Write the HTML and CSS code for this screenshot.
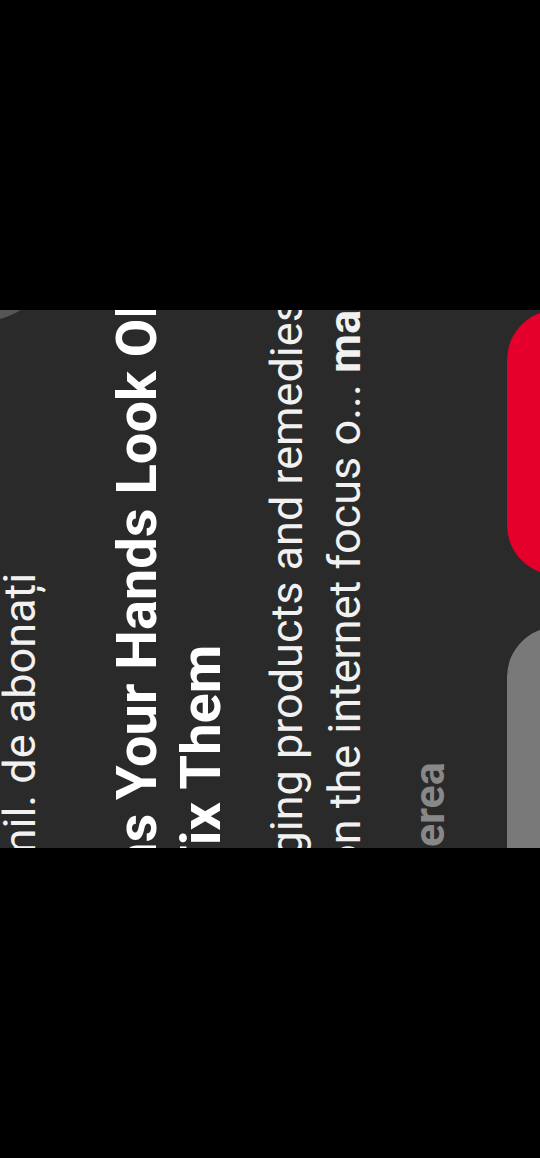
FILE: index.html
```html
<!DOCTYPE html>
<html lang="ro">
<head>
    <meta charset="UTF-8">
    <meta name="viewport" content="width=device-width, initial-scale=1.0">
    <title>Canal</title>
    <link rel="stylesheet" href="styles.css">
</head>
<body>
    <div id="stage">
        <div id="card">
            <div class="avatar"></div>
            <p class="subs">mil. de abonați</p>
            <h1 class="title">
                <span class="t1">ns Your Hands Look Old</span>
                <span class="t2">Fix Them</span>
            </h1>
            <div class="desc">
                <p class="d1">aging products and remedies</p>
                <p class="d2">on the internet focus o... <b>mai mult</b></p>
            </div>
            <p class="label">erea</p>
            <div class="actions">
                <div class="btn btn-gray"></div>
                <div class="btn btn-red"></div>
            </div>
        </div>
    </div>
</body>
</html>
```

FILE: styles.css
```css
body {
    margin: 0;
    background-color: #000;
    font-family: Roboto, "Noto Sans", sans-serif;
    color: #f1f1f1;
}

#stage {
    width: 540px;
    height: 538px;
    margin-top: 310px;
    overflow: hidden;
    background-color: #2a2a2a;
}

/* the card is drawn on its side, so it is laid out upright and then turned */
#card {
    position: relative;
    width: 538px;
    height: 540px;
    transform-origin: 0 0;
    transform: translateY(538px) rotate(-90deg);
}

#card p {
    margin: 0;
    white-space: nowrap;
}

.avatar {
    position: absolute;
    left: 525px;
    top: -122px;
    width: 190px;
    height: 190px;
    border-radius: 50%;
    background-color: #555;
}

.subs {
    font-size: 45px;
    line-height: 40px;
    text-indent: -20px;
}

.title {
    margin: 65px 0 0;
    font-size: 56px;
    font-weight: 700;
    line-height: 64px;
    color: #fff;
    white-space: nowrap;
}

.title span {
    display: block;
}

.t1 {
    text-indent: -26px;
}

.t2 {
    text-indent: -28px;
}

.desc {
    margin-top: 25px;
    font-size: 45px;
    line-height: 58px;
}

#card .d1 {
    text-indent: -33px;
}

#card .d2 {
    text-indent: -22px;
}

#card .label {
    margin-top: 30px;
    font-size: 43px;
    font-weight: 700;
    line-height: 50px;
    color: #888;
    text-indent: 1px;
}

.actions {
    display: flex;
    gap: 52px;
    margin-top: 53px;
    margin-left: -80px;
    height: 100px;
}

.btn {
    height: 100px;
    border-radius: 50px;
}

.btn-gray {
    width: 301px;
    background-color: #797979;
}

.btn-red {
    width: 265px;
    background-color: #e4002b;
}
```
